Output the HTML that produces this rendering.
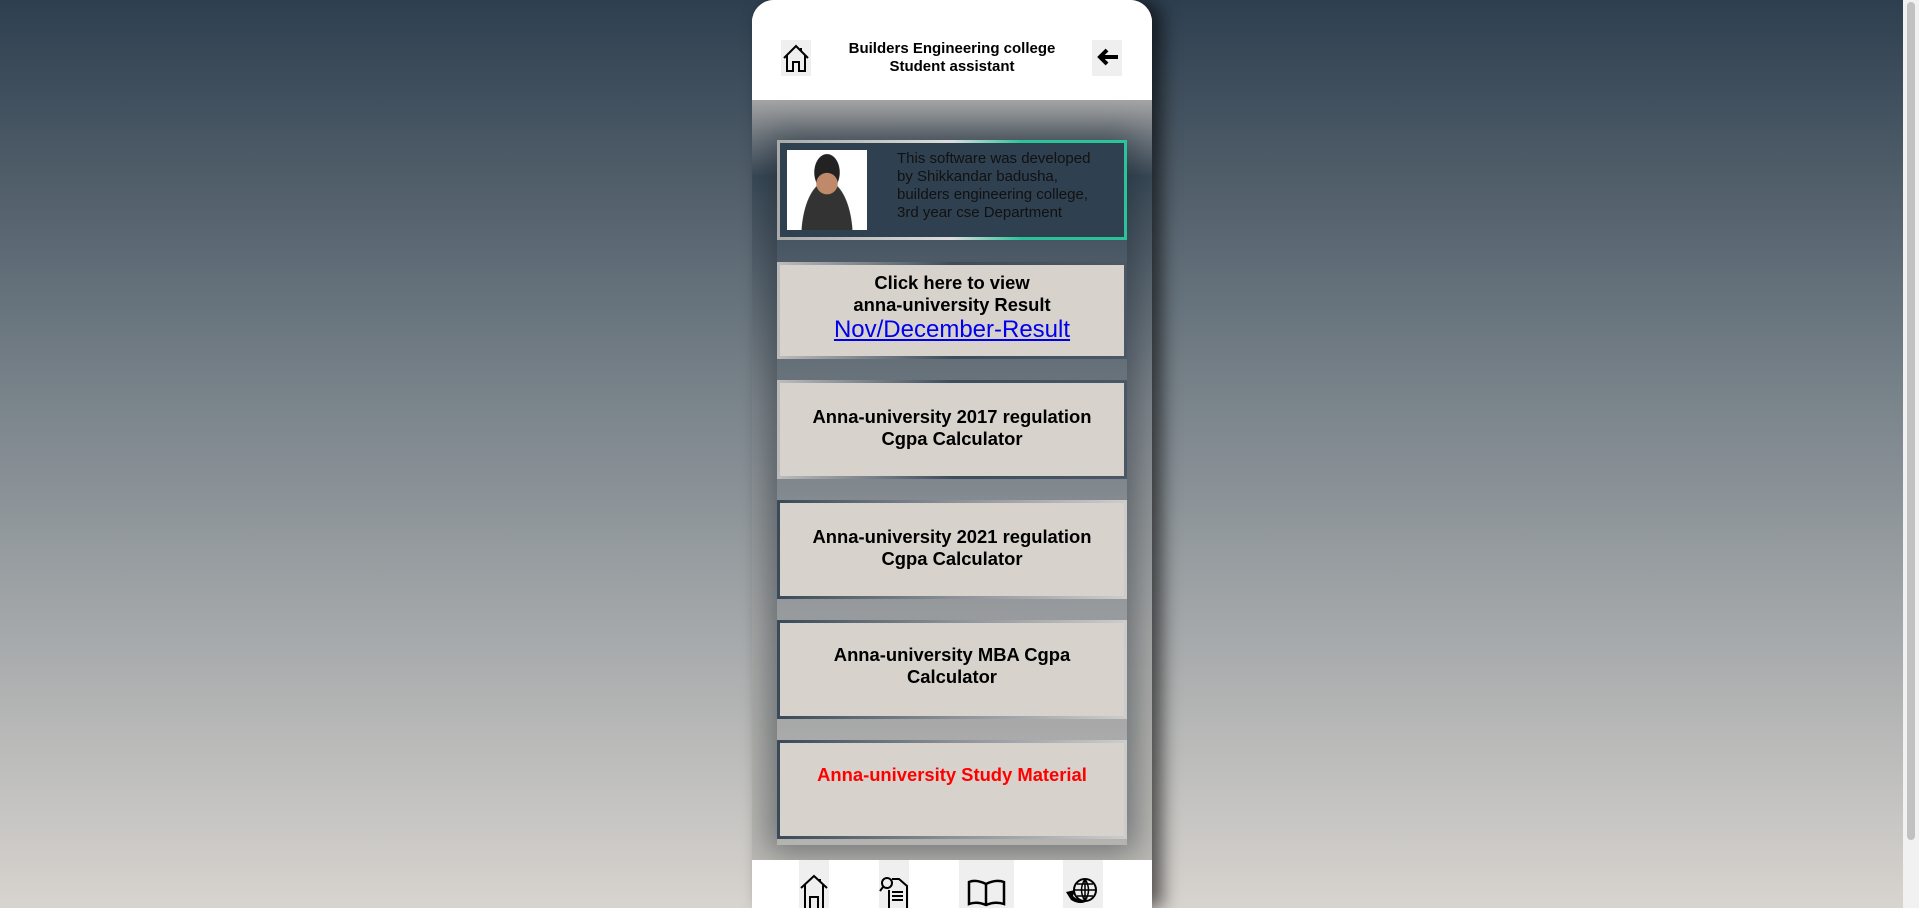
<!DOCTYPE html>
<html><head><meta charset="utf-8"><style>
*{margin:0;padding:0;box-sizing:border-box}
body{width:1919px;height:908px;overflow:hidden;background:linear-gradient(#2e3f4f,#7b858c 45%,#d8d4cf);font-family:"Liberation Sans",sans-serif;position:relative}
.sb{position:absolute;right:0;top:0;width:16px;height:908px;background:#f1f1f1}
.sb div{position:absolute;left:4px;top:2px;width:8px;height:838px;background:#c1c1c1;border-radius:4px}
.panel{position:absolute;left:752px;top:0;width:400px;height:908px;border-radius:22px 22px 0 0;overflow:hidden;box-shadow:10px 0 18px rgba(0,0,0,.6);background:#fff}
.head{height:100px;background:#fff;position:relative}
.title{position:absolute;left:0;right:0;top:40px;text-align:center;font-weight:bold;font-size:15px;line-height:18px;color:#000}
.ib{position:absolute;background:#efefef}
.content{position:absolute;top:100px;left:0;width:400px;height:760px;background:linear-gradient(#a5a5a5,#3a4a58 10%,#7f868c 40%,#a8a9a8 70%,#bcbab5);}
.inner{position:absolute;left:25px;top:40px;width:350px;height:705px;background:linear-gradient(#2f4051,#5a6670 25%,#8a9095 55%,#aaa 85%,#b5b3af);box-shadow:0 0 30px 8px rgba(20,30,40,.45)}
.c1{position:absolute;left:25px;top:40px;width:350px;height:100px;background:#2f4051;border:3px solid;border-image:linear-gradient(90deg,#aaa,#ddd 50%,#2bc49a 70%) 1}
.photo{position:absolute;left:7px;top:7px;width:80px;height:80px;background:radial-gradient(circle at 50% 42%,#c08a6a 0 17%,transparent 18%),radial-gradient(ellipse at 50% 28%,#222 0 22%,transparent 23%),radial-gradient(ellipse at 50% 110%,#333 0 45%,transparent 46%),#fff}
.c1 p{position:absolute;left:117px;top:7px;font-size:15px;line-height:18px;color:#111}
.card{position:absolute;left:25px;width:350px;height:99px;background:#d7d2cc;border:3px solid;border-image:linear-gradient(90deg,#bbb,#3d4d5c 50%,#4a5866) 1;text-align:center;font-weight:bold;font-size:18.4px;line-height:22px;color:#000}
.card.b{border-image:linear-gradient(90deg,#3a4a58,#8a9096 50%,#ccc) 1}
.nav{position:absolute;top:860px;left:0;width:400px;height:48px;background:#fff}
</style></head><body>
<div class="sb"><div></div></div>
<div class="panel">
<div class="head">
<div class="ib" style="left:29px;top:40px;width:30px;height:36px"><svg width="30" height="36" viewBox="0 0 30 36"><path d="M3 18 L15 6 L27 18 M6 15 V31 H12 V22 H18 V31 H24 V15 M20 8 V11" fill="none" stroke="#000" stroke-width="2"/></svg></div>
<div class="title">Builders Engineering college<br>Student assistant</div>
<div class="ib" style="left:340px;top:40px;width:30px;height:36px"><svg width="30" height="36" viewBox="0 0 30 36"><path d="M26 17 H8 M15 10 L8 17 L15 24" fill="none" stroke="#000" stroke-width="4"/></svg></div>
</div>
<div class="content">
<div class="inner"></div>
<div class="c1"><div class="photo"></div><p>This software was developed<br>by Shikkandar badusha,<br>builders engineering college,<br>3rd year cse Department</p></div>
<div class="card" style="top:162px;height:97px;padding-top:7px">Click here to view<br>anna-university Result<br><span style="color:#00e;text-decoration:underline;font-weight:normal;font-size:24px;line-height:28px">Nov/December-Result</span></div>
<div class="card" style="top:280px;padding-top:23px">Anna-university 2017 regulation<br>Cgpa Calculator</div>
<div class="card b" style="top:400px;padding-top:23px">Anna-university 2021 regulation<br>Cgpa Calculator</div>
<div class="card b" style="top:520px;padding-top:21px">Anna-university MBA Cgpa<br>Calculator</div>
<div class="card b" style="top:640px;padding-top:21px;color:#f00">Anna-university Study Material</div>
</div>
<div class="nav">
<div class="ib" style="left:47px;top:0;width:30px;height:48px"><svg width="30" height="48" viewBox="0 0 30 48"><path d="M2 28 L15 16 L28 28 M6 25 V48 M24 25 V48 M11 48 V37 H19 V48 M21 19 V22" fill="none" stroke="#000" stroke-width="2"/></svg></div>
<div class="ib" style="left:127px;top:0;width:30px;height:48px"><svg width="30" height="48" viewBox="0 0 30 48"><circle cx="8" cy="23" r="5" fill="none" stroke="#000" stroke-width="2"/><path d="M4 27 L1 31 M13 19 H20 L28 26 V48 M10 30 V48 M13 32 H24 M13 36 H24 M13 40 H24" fill="none" stroke="#000" stroke-width="2"/></svg></div>
<div class="ib" style="left:207px;top:0;width:55px;height:48px"><svg width="55" height="48" viewBox="0 0 55 48"><path d="M27 24 Q17 19 10 22 V44 Q18 41 27 45 Q36 41 45 44 V22 Q37 19 27 24 Z M27 24 V45" fill="none" stroke="#000" stroke-width="2.5"/></svg></div>
<div class="ib" style="left:311px;top:0;width:40px;height:48px"><svg width="40" height="48" viewBox="0 0 40 48"><circle cx="22" cy="30" r="11" fill="none" stroke="#000" stroke-width="2"/><path d="M11 30 H33 M22 19 V41 M14 24 H30 M14 36 H30 M22 19 Q15 30 22 41 M22 19 Q29 30 22 41" fill="none" stroke="#000" stroke-width="1.5"/><path d="M3 32 L12 30 L10 36 Q16 42 26 40 Q18 46 8 40 Z" fill="#000"/></svg></div>
</div>
</div>
</body></html>
